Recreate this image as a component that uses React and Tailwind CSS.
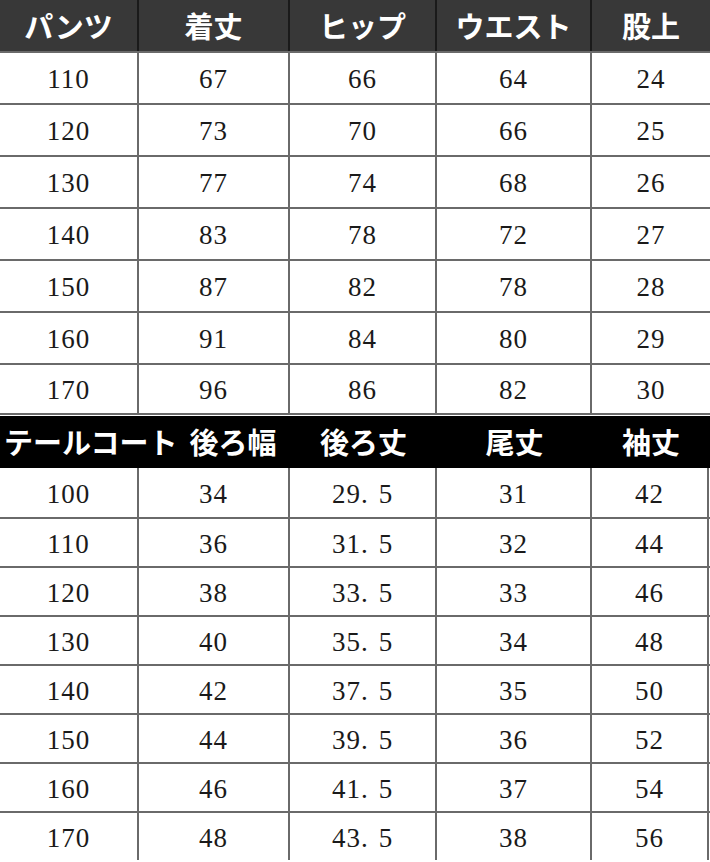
const pantsHead = ["パンツ", "着丈", "ヒップ", "ウエスト", "股上"];
const pantsRows = [
  ["110", "67", "66", "64", "24"],
  ["120", "73", "70", "66", "25"],
  ["130", "77", "74", "68", "26"],
  ["140", "83", "78", "72", "27"],
  ["150", "87", "82", "78", "28"],
  ["160", "91", "84", "80", "29"],
  ["170", "96", "86", "82", "30"],
];

const coatRows = [
  ["100", "34", "29.5", "31", "42"],
  ["110", "36", "31.5", "32", "44"],
  ["120", "38", "33.5", "33", "46"],
  ["130", "40", "35.5", "34", "48"],
  ["140", "42", "37.5", "35", "50"],
  ["150", "44", "39.5", "36", "52"],
  ["160", "46", "41.5", "37", "54"],
  ["170", "48", "43.5", "38", "56"],
];

const cols = "grid grid-cols-[139px_151px_147px_155px_118px]";
const jp = { fontFamily: '"Noto Sans CJK JP", "Noto Sans", sans-serif' };
const num = { fontFamily: '"Liberation Serif", "Noto Sans CJK JP", serif' };

function Value({ v }) {
  if (!v.includes(".")) return v;
  const [a, b] = v.split(".");
  return (
    <>
      {a}
      <span className="mr-[10px]">.</span>
      {b}
    </>
  );
}

export default function App() {
  return (
    <div className="w-[710px] h-[862px] bg-white overflow-hidden">
      {/* パンツ */}
      <div className={`${cols} h-[51px] bg-[#383838] text-white`} style={jp}>
        {pantsHead.map((h, i) => (
          <div
            key={h}
            className={`flex items-center justify-center text-[29px] font-bold ${
              i < 4 ? "border-r-2 border-[#1a1a1a]" : ""
            }`}
          >
            {h}
          </div>
        ))}
      </div>
      {pantsRows.map((r, ri) => (
        <div
          key={ri}
          className={`${cols} h-[52px] border-t-2 border-[#6a6a6a] ${
            ri === pantsRows.length - 1 ? "border-b-2" : ""
          }`}
          style={num}
        >
          {r.map((v, i) => (
            <div
              key={i}
              className={`flex items-center justify-center pt-[3px] text-[27px] tracking-[1px] text-[#1a1a1a] ${
                i < 4 ? "border-r-2 border-[#6a6a6a]" : ""
              }`}
            >
              {v}
            </div>
          ))}
        </div>
      ))}

      {/* テールコート */}
      <div className={`${cols} h-[52px] mt-[1px] bg-black text-white`} style={jp}>
        <div className="col-span-2 flex items-center pl-[4px] text-[29px] font-bold whitespace-nowrap">
          テールコート<span className="ml-[12px]">後ろ幅</span>
        </div>
        {["後ろ丈", "尾丈", "袖丈"].map((h) => (
          <div key={h} className="flex items-center justify-center text-[29px] font-bold">
            {h}
          </div>
        ))}
      </div>
      {coatRows.map((r, ri) => (
        <div
          key={ri}
          className={`${cols} h-[49px] ${ri > 0 ? "border-t-2 border-[#6a6a6a]" : ""}`}
          style={num}
        >
          {r.map((v, i) => (
            <div
              key={i}
              className={`flex items-center justify-center pt-[4px] text-[27px] tracking-[1px] text-[#1a1a1a] border-r-2 border-[#6a6a6a] ${
                i === 4 ? "mr-[1px]" : ""
              }`}
            >
              <Value v={v} />
            </div>
          ))}
        </div>
      ))}
    </div>
  );
}
